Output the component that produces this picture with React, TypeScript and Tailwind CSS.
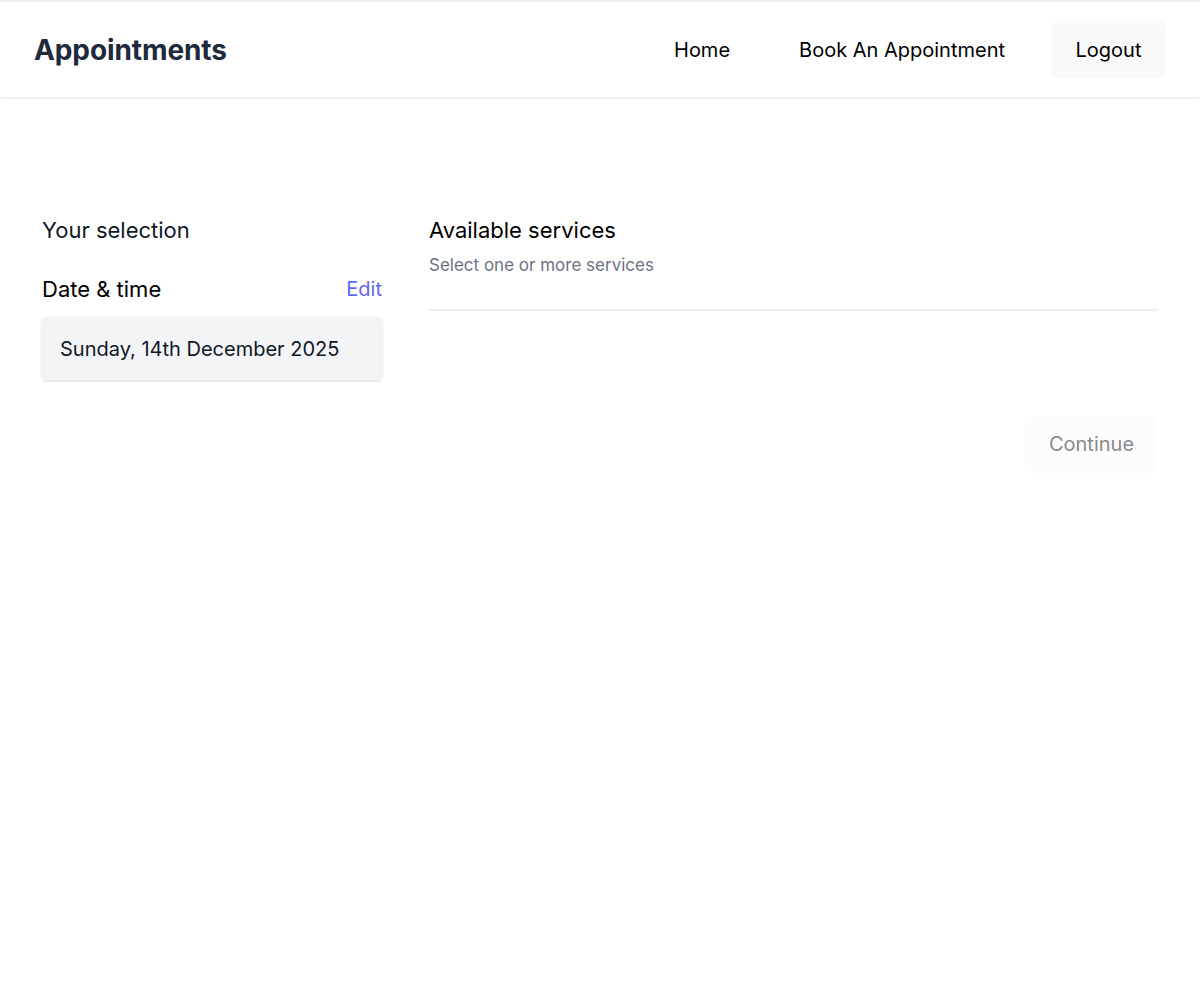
import React from "react";

const NavLink = ({ label }: { label: string }) => (
  <a href="#" className="px-6 py-4 text-[20px] font-normal text-black">
    {label}
  </a>
);

export default function App() {
  return (
    <div
      className="min-h-[1003px] bg-white"
      style={{ fontFamily: "Inter, 'Noto Sans', sans-serif" }}
    >
      {/* Header */}
      <header className="flex h-[97px] items-center justify-between border-t-2 border-[#efefef] bg-white pl-[34px] pr-[35px] shadow-[0_1px_3px_rgba(0,0,0,0.12)]">
        <h1 className="text-[28px] font-bold tracking-[-0.1px] text-[#1e293b]">
          Appointments
        </h1>
        <nav className="flex items-center gap-[21px]">
          <NavLink label="Home" />
          <NavLink label="Book An Appointment" />
          <button className="ml-[2px] h-[57px] w-[113px] rounded-md bg-[#f9f9f9] text-[20px] font-normal text-black">
            Logout
          </button>
        </nav>
      </header>

      {/* Main */}
      <main className="flex gap-[47px] px-[42px] pt-[119px]">
        {/* Left column */}
        <section className="w-[340px] shrink-0">
          <h2 className="text-[22px] leading-[28px] text-[#111827]">
            Your selection
          </h2>
          <div className="mt-[30px] flex items-center justify-between">
            <h3 className="text-[22px] leading-[28px] text-black">
              Date &amp; time
            </h3>
            <a href="#" className="text-[20px] text-[#6366f1]">
              Edit
            </a>
          </div>
          <div className="mt-[13px] flex h-[63px] items-center rounded-sm bg-[#f3f4f6] px-[18px] text-[20px] text-[#111827] shadow-[0_1px_3px_rgba(0,0,0,0.15)]">
            Sunday, 14th December 2025
          </div>
        </section>

        {/* Right column */}
        <section className="flex-1">
          <h2 className="text-[22px] leading-[28px] text-black">
            Available services
          </h2>
          <p className="mt-[9px] text-[17px] text-[#6b7280]">
            Select one or more services
          </p>
          <div className="mt-[30px] h-[2px] w-full bg-[#eeeeee]" />
          <div className="mt-[105px] flex justify-end">
            <button className="h-[57px] w-[133px] rounded-md bg-[#fcfcfc] text-[20px] text-[#8a8a8a]">
              Continue
            </button>
          </div>
        </section>
      </main>
    </div>
  );
}
